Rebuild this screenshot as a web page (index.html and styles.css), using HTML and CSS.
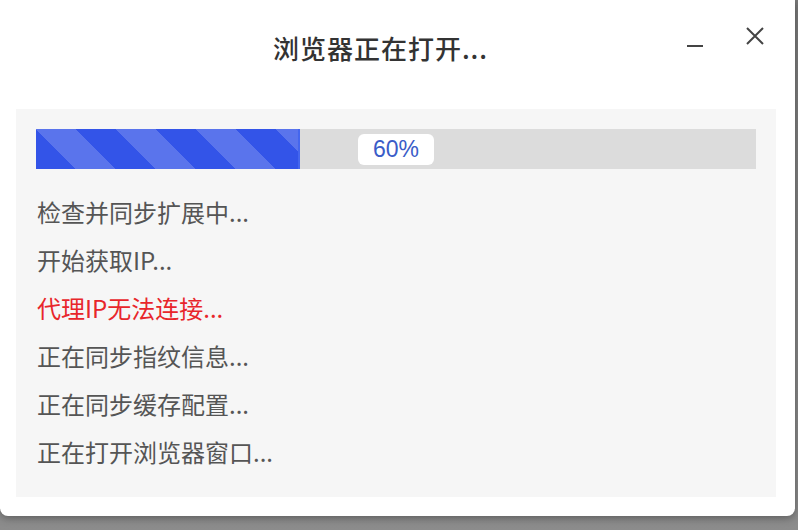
FILE: index.html
```html
<!DOCTYPE html>
<html lang="zh-CN">
<head>
    <meta charset="UTF-8">
    <meta name="viewport" content="width=device-width, initial-scale=1.0">
    <title>浏览器正在打开</title>
    <link rel="stylesheet" href="styles.css">
</head>
<body>
    <div class="dialog">
        <div class="dialog-header">
            <h1 class="dialog-title">浏览器正在打开...</h1>
            <div class="window-controls">
                <svg class="btn-min" width="20" height="20" viewBox="0 0 20 20">
                    <line x1="2" y1="10" x2="18" y2="10" stroke="#444" stroke-width="2"/>
                </svg>
                <svg class="btn-close" width="20" height="20" viewBox="0 0 20 20">
                    <path d="M2 2 L18 18 M18 2 L2 18" stroke="#444" stroke-width="2" fill="none"/>
                </svg>
            </div>
        </div>

        <div class="progress-panel">
            <div class="progress-bar">
                <div class="progress-fill" style="width: 36.7%"></div>
                <span class="progress-label">60%</span>
            </div>

            <ul class="step-list">
                <li>检查并同步扩展中...</li>
                <li>开始获取IP...</li>
                <li class="step-error">代理IP无法连接...</li>
                <li>正在同步指纹信息...</li>
                <li>正在同步缓存配置...</li>
                <li>正在打开浏览器窗口...</li>
            </ul>
        </div>
    </div>
</body>
</html>
```

FILE: styles.css
```css
html, body {
    margin: 0;
    padding: 0;
}

body {
    width: 798px;
    height: 530px;
    overflow: hidden;
    background: linear-gradient(#7a7a7a, #8c8c8c);
    font-family: "Noto Sans CJK SC", "Noto Sans", sans-serif;
}

/* the white window */
.dialog {
    width: 795px;
    height: 516px;
    background-color: #fff;
    border-radius: 0 0 8px 8px;
    box-shadow: 0 2px 8px rgba(0, 0, 0, 0.35);
    display: flex;
    flex-direction: column;
}

.dialog-header {
    height: 109px;
    display: grid;
    grid-template-columns: 1fr;
}

.dialog-title {
    grid-area: 1 / 1;
    justify-self: center;
    align-self: start;
    margin: 30px 34px 0 0;
    font-size: 26px;
    line-height: 36px;
    font-weight: 500;
    letter-spacing: 1px;
    color: #333;
}

.window-controls {
    grid-area: 1 / 1;
    justify-self: end;
    align-self: start;
    display: flex;
    align-items: flex-start;
    gap: 40px;
    margin: 26px 30px 0 0;
}

.btn-min {
    margin-top: 10px;
}

/* grey box with the bar and the steps */
.progress-panel {
    margin: 0 19px 0 16px;
    padding: 20px 20px 21px 20px;
    background-color: #f6f6f6;
}

.progress-bar {
    height: 40px;
    background-color: #dcdcdc;
    display: flex;
    align-items: center;
    justify-content: center;
    position: relative;
}

.progress-fill {
    position: absolute;
    left: 0;
    top: 0;
    bottom: 0;
    box-sizing: border-box;
    background-color: #3354e8;
    background-image: linear-gradient(45deg,
        #5a74ec 25%, transparent 25%, transparent 50%,
        #5a74ec 50%, #5a74ec 75%, transparent 75%, transparent);
    background-size: 80px 80px;
    border-right: 2px solid #4466ee;
}

.progress-label {
    position: relative;
    background-color: #fff;
    border-radius: 6px;
    width: 76px;
    height: 31px;
    line-height: 31px;
    text-align: center;
    font-family: "Liberation Sans", Arial, sans-serif;
    font-size: 23px;
    color: #3a5cc8;
}

.step-list {
    list-style: none;
    margin: 19px 0 0 0;
    padding: 0;
}

.step-list li {
    height: 48px;
    line-height: 48px;
    font-size: 24px;
    color: #555;
    padding-left: 1px;
}

.step-list .step-error {
    color: #e8262b;
}
```
